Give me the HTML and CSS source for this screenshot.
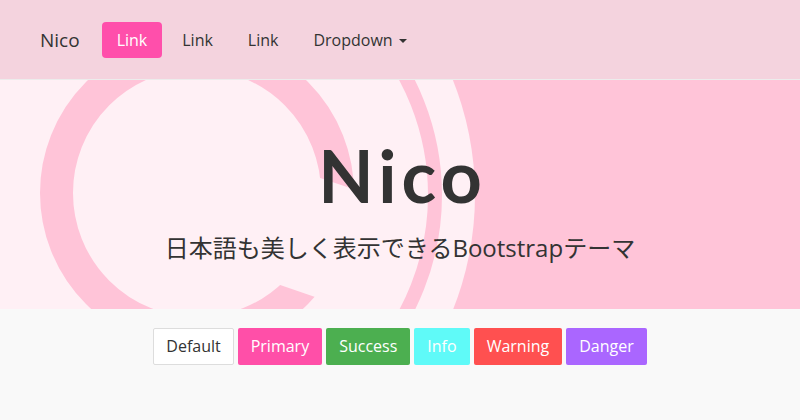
FILE: index.html
```html
<!DOCTYPE html>
<html lang="ja">
<head>
<meta charset="utf-8">
<title>Nico</title>
<link rel="stylesheet" href="styles.css">
</head>
<body>
<nav class="navbar">
  <div class="container nav-inner">
    <a class="brand" href="#">Nico</a>
    <ul class="nav">
      <li class="active"><a href="#">Link</a></li>
      <li><a href="#">Link</a></li>
      <li><a href="#">Link</a></li>
      <li><a href="#">Dropdown <span class="caret"></span></a></li>
    </ul>
  </div>
</nav>
<header class="hero">
  <svg class="hero-bg" width="800" height="229" viewBox="0 0 800 229" aria-hidden="true">
    <rect x="0" y="0" width="800" height="229" fill="#ffc4d8"/>
    <circle cx="165" cy="115" r="310" fill="#fff0f5"/>
    <circle cx="185" cy="115" r="250" fill="none" stroke="#ffc4d8" stroke-width="14"/>
    <circle cx="197" cy="113" r="140.5" fill="none" stroke="#ffc4d8" stroke-width="33"/>
    <polygon points="300,91.3 380,118 380,250 371,236.2 245,193" fill="#fff0f5"/>
  </svg>
  <div class="hero-content">
    <h1 class="hero-title">Nico</h1>
    <p class="hero-lead">日本語も美しく表示できるBootstrapテーマ</p>
  </div>
</header>
<main class="btn-row">
  <button class="btn btn-default">Default</button>
  <button class="btn btn-primary">Primary</button>
  <button class="btn btn-success">Success</button>
  <button class="btn btn-info">Info</button>
  <button class="btn btn-warning">Warning</button>
  <button class="btn btn-danger">Danger</button>
</main>
</body>
</html>
```
FILE: styles.css
```css
html, body {
  margin: 0;
  padding: 0;
}
body {
  width: 800px;
  height: 420px;
  overflow: hidden;
  background: #f9f9f9;
  color: #333;
  font-family: "Open Sans", "Noto Sans CJK JP", sans-serif;
}
.navbar {
  height: 79px;
  background: #f4d3de;
  border-bottom: 1px solid #ececec;
}
.container {
  width: 750px;
  margin: 0 auto;
  padding: 0 15px;
  box-sizing: border-box;
}
.nav-inner {
  display: flex;
  align-items: center;
  height: 79px;
}
.brand {
  font-size: 19px;
  color: #333;
  text-decoration: none;
  margin-right: 22px;
  line-height: 36px;
}
.nav {
  list-style: none;
  margin: 0;
  padding: 0;
  display: flex;
  gap: 5px;
}
.nav a {
  display: block;
  padding: 0 15px;
  height: 36px;
  line-height: 36px;
  font-size: 16px;
  color: #333;
  text-decoration: none;
  border-radius: 4px;
}
.nav .active a {
  background: #ff4fab;
  color: #fff;
}
.caret {
  display: inline-block;
  width: 0;
  height: 0;
  margin-left: 2px;
  vertical-align: middle;
  border-top: 4px solid #333;
  border-left: 4px solid transparent;
  border-right: 4px solid transparent;
}
.hero {
  position: relative;
  height: 229px;
  overflow: hidden;
  background: #fff0f5;
}
.hero-bg {
  position: absolute;
  left: 0;
  top: 0;
  display: block;
}
.hero-content {
  position: relative;
  display: flex;
  flex-direction: column;
  align-items: center;
  padding-top: 55px;
}
.hero-title {
  margin: 0;
  padding-left: 5px;
  font-family: "Lato", "Open Sans", sans-serif;
  font-weight: 700;
  font-size: 72px;
  letter-spacing: 5px;
  line-height: 80px;
  color: #333;
}
.hero-lead {
  margin: 16px 0 0;
  font-size: 24px;
  line-height: 34px;
  color: #333;
}
.btn-row {
  display: flex;
  justify-content: center;
  gap: 4px;
  padding-top: 19px;
}
.btn {
  font-family: "Open Sans", sans-serif;
  font-size: 16px;
  line-height: 23px;
  padding: 6px 12px;
  border: 1px solid transparent;
  border-radius: 2px;
  color: #fff;
  cursor: pointer;
}
.btn-default {
  background: #fff;
  color: #333;
  border-color: #ddd;
}
.btn-primary { background: #ff4fa8; }
.btn-success { background: #4caf50; }
.btn-info { background: #5ffaf8; }
.btn-warning { background: #ff5050; }
.btn-danger { background: #aa66ff; }
```
